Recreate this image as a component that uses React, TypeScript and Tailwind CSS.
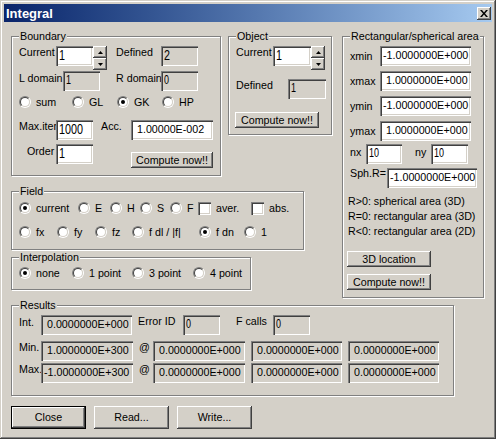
import React from 'react';

const sunken =
  'shadow-[inset_1px_1px_#808080,inset_2px_2px_#404040,inset_-1px_-1px_#ffffff,inset_-2px_-2px_#d4d0c8]';
const raised = 'shadow-[inset_-1px_-1px_#404040,inset_1px_1px_#ffffff,inset_-2px_-2px_#808080]';

type Size = 'n' | 'm' | 'b';

const Lbl: React.FC<{ className?: string; children: React.ReactNode }> = ({ className = '', children }) => (
  <span className={`block shrink-0 whitespace-nowrap leading-[13px] ${className}`}>{children}</span>
);

const Edit: React.FC<{ w: string; value: string; ro?: boolean; size?: Size }> = ({ w, value, ro, size = 'n' }) => (
  <div
    className={`${w} h-[20px] shrink-0 overflow-hidden whitespace-nowrap pl-[3px] ${ro ? 'bg-[#d4d0c8]' : 'bg-white'} ${sunken}`}
  >
    {size === 'b' && (
      <span className="block origin-left scale-x-[0.72] pt-[1px] text-[15px] leading-[15px]">{value}</span>
    )}
    {size === 'm' && (
      <span className="block origin-left scale-x-[0.72] pt-[3px] text-[12.5px] leading-[13px]">{value}</span>
    )}
    {size === 'n' && <span className="block pt-[3px] leading-[13px]">{value}</span>}
  </div>
);

const Btn: React.FC<{ className: string; children: React.ReactNode }> = ({ className, children }) => (
  <div className={`flex shrink-0 items-center justify-center whitespace-nowrap bg-[#d4d0c8] ${raised} ${className}`}>
    {children}
  </div>
);

const Spin: React.FC = () => (
  <div className="flex h-[24px] w-[14px] shrink-0 flex-col">
    <div className={`flex h-[12px] items-center justify-center bg-[#d4d0c8] ${raised}`}>
      <svg width="5" height="3" viewBox="0 0 5 3">
        <path d="M2.5 0L5 3H0z" fill="#000" />
      </svg>
    </div>
    <div className={`flex h-[12px] items-center justify-center bg-[#d4d0c8] ${raised}`}>
      <svg width="5" height="3" viewBox="0 0 5 3">
        <path d="M0 0h5L2.5 3z" fill="#000" />
      </svg>
    </div>
  </div>
);

const Radio: React.FC<{ on?: boolean }> = ({ on }) => (
  <span className="flex h-[12px] w-[12px] shrink-0 rounded-full border border-t-[#808080] border-r-white border-b-white border-l-[#808080]">
    <span className="flex flex-1 items-center justify-center rounded-full border border-t-[#404040] border-r-[#d4d0c8] border-b-[#d4d0c8] border-l-[#404040] bg-white">
      {on && <span className="h-[4px] w-[4px] rounded-full bg-black" />}
    </span>
  </span>
);

const Check: React.FC = () => <span className={`block h-[13px] w-[13px] shrink-0 bg-white ${sunken}`} />;

const Opt: React.FC<{ w?: string; on?: boolean; check?: boolean; label: string }> = ({ w = '', on, check, label }) => (
  <div className={`flex shrink-0 items-center ${w}`}>
    {check ? <Check /> : <Radio on={on} />}
    <span className="ml-[5px] whitespace-nowrap leading-[13px]">{label}</span>
  </div>
);

const Group: React.FC<{ label: string; className: string; children?: React.ReactNode }> = ({
  label,
  className,
  children,
}) => (
  <div className={`relative shrink-0 border border-[#808080] shadow-[inset_1px_1px_#ffffff,1px_1px_#ffffff] ${className}`}>
    <span className="absolute -top-[7px] left-[7px] whitespace-nowrap bg-[#d4d0c8] px-[1px] leading-[13px]">
      {label}
    </span>
    {children}
  </div>
);

export default function App() {
  return (
    <div className="h-[439px] w-[496px] bg-[#d4d0c8] p-[4px] font-['Liberation_Sans',Arial,sans-serif] text-[10.7px] text-black shadow-[inset_-1px_-1px_#404040,inset_1px_1px_#d4d0c8,inset_-2px_-2px_#808080,inset_2px_2px_#ffffff]">
      {/* Title bar */}
      <div className="flex h-[18px] items-center justify-between bg-linear-to-r from-[#0a246a] to-[#a6caf0] pr-[1px] pl-[2px]">
        <span className="text-[13px] leading-none font-bold text-white">Integral</span>
        <div className={`flex h-[13px] w-[14px] items-center justify-center bg-[#d4d0c8] ${raised}`}>
          <svg width="8" height="7" viewBox="0 0 8 7">
            <path d="M0 0h2l2 2.4L6 0h2L5 3.5 8 7H6L4 4.6 2 7H0l3-3.5z" fill="#000" />
          </svg>
        </div>
      </div>

      <div className="mt-[14px] pl-[7px]">
        <div className="flex items-start">
          <div className="w-[321px] shrink-0">
            <div className="flex items-start">
              {/* Boundary */}
              <Group label="Boundary" className="h-[140px] w-[210px] pt-[9px] pl-[7px]">
                <div className="flex items-start">
                  <Lbl className="w-[37px]">Current</Lbl>
                  <Edit w="w-[37px]" value="1" size="b" />
                  <Spin />
                  <Lbl className="ml-[9px] w-[45px]">Defined</Lbl>
                  <Edit w="w-[37px]" value="2" ro size="b" />
                </div>
                <div className="mt-[1px] flex items-start">
                  <Lbl className="mt-[1px] w-[44px]">L domain</Lbl>
                  <Edit w="w-[37px]" value="1" ro size="m" />
                  <Lbl className="mt-[1px] ml-[16px] w-[45px]">R domain</Lbl>
                  <Edit w="w-[37px]" value="0" ro size="m" />
                </div>
                <div className="mt-[5px] flex h-[12px] items-center">
                  <Opt w="w-[53px]" label="sum" />
                  <Opt w="w-[45px]" label="GL" />
                  <Opt w="w-[45px]" on label="GK" />
                  <Opt label="HP" />
                </div>
                <div className="mt-[12px] flex items-start">
                  <Lbl className="w-[37px]">Max.iter</Lbl>
                  <Edit w="w-[37px]" value="1000" size="b" />
                  <Lbl className="ml-[8px] w-[30px]">Acc.</Lbl>
                  <Edit w="w-[82px]" value={'\u00a01.00000E-002'} />
                </div>
                <div className="mt-[4px] flex items-start">
                  <Lbl className="mt-[1px] ml-[8px] w-[29px]">Order</Lbl>
                  <Edit w="w-[37px]" value="1" size="b" />
                  <Btn className="mt-[8px] ml-[38px] h-[16px] w-[82px]">Compute now!!</Btn>
                </div>
              </Group>

              {/* Object */}
              <Group label="Object" className="ml-[7px] h-[99px] w-[104px] pt-[9px] pl-[7px]">
                <div className="flex items-start">
                  <Lbl className="w-[37px]">Current</Lbl>
                  <Edit w="w-[38px]" value="1" size="b" />
                  <Spin />
                </div>
                <div className="mt-[9px] flex items-start">
                  <Lbl className="w-[52px]">Defined</Lbl>
                  <Edit w="w-[38px]" value="1" ro size="m" />
                </div>
                <Btn className="mt-[13px] -ml-[1px] h-[16px] w-[84px]">Compute now!!</Btn>
              </Group>
            </div>

            {/* Field */}
            <Group label="Field" className="mt-[15px] h-[59px] w-[293px] pt-[10px] pl-[7px]">
              <div className="flex h-[12px] items-center">
                <Opt w="w-[59px]" on label="current" />
                <Opt w="w-[32px]" label="E" />
                <Opt w="w-[30px]" label="H" />
                <Opt w="w-[30px]" label="S" />
                <Opt w="w-[28px]" label="F" />
                <Opt w="w-[53px]" check label="aver." />
                <Opt check label="abs." />
              </div>
              <div className="mt-[12px] flex h-[12px] items-center">
                <Opt w="w-[38px]" label="fx" />
                <Opt w="w-[38px]" label="fy" />
                <Opt w="w-[37px]" label="fz" />
                <Opt w="w-[67px]" label="f dl / |f|" />
                <Opt w="w-[45px]" on label="f dn" />
                <Opt label="1" />
              </div>
            </Group>

            {/* Interpolation */}
            <Group label="Interpolation" className="mt-[7px] h-[33px] w-[240px] pt-[9px] pl-[7px]">
              <div className="flex h-[12px] items-center">
                <Opt w="w-[53px]" on label="none" />
                <Opt w="w-[60px]" label="1 point" />
                <Opt w="w-[61px]" label="3 point" />
                <Opt label="4 point" />
              </div>
            </Group>
          </div>

          {/* Rectangular/spherical area */}
          <Group label="Rectangular/spherical area" className="ml-[10px] h-[262px] w-[142px] pt-[9px] pl-[7px]">
            <div className="flex h-[20px] items-center">
              <Lbl className="mt-[1px] w-[30px]">xmin</Lbl>
              <Edit w="w-[91px]" value="-1.0000000E+000" />
            </div>
            <div className="mt-[5px] flex h-[20px] items-center">
              <Lbl className="mt-[1px] w-[30px]">xmax</Lbl>
              <Edit w="w-[91px]" value={'\u00a01.0000000E+000'} />
            </div>
            <div className="mt-[5px] flex h-[20px] items-center">
              <Lbl className="mt-[1px] w-[30px]">ymin</Lbl>
              <Edit w="w-[91px]" value="-1.0000000E+000" />
            </div>
            <div className="mt-[5px] flex h-[20px] items-center">
              <Lbl className="mt-[1px] w-[30px]">ymax</Lbl>
              <Edit w="w-[91px]" value={'\u00a01.0000000E+000'} />
            </div>
            <div className="mt-[3px] flex items-start">
              <Lbl className="mt-[2px] w-[16px]">nx</Lbl>
              <Edit w="w-[36px]" value="10" size="m" />
              <Lbl className="mt-[2px] ml-[13px] w-[16px]">ny</Lbl>
              <Edit w="w-[37px]" value="10" size="m" />
            </div>
            <div className="mt-[4px] flex items-start">
              <Lbl className="-mt-[1px] w-[37px]">Sph.R=</Lbl>
              <Edit w="w-[90px]" value="-1.0000000E+000" />
            </div>
            <div className="mt-[6px] -ml-[2px] leading-[15px] whitespace-nowrap">
              <div>R&gt;0: spherical area (3D)</div>
              <div>R=0: rectangular area (3D)</div>
              <div>R&lt;0: rectangular area (2D)</div>
            </div>
            <Btn className="mt-[12px] -ml-[3px] h-[16px] w-[84px]">3D location</Btn>
            <Btn className="mt-[7px] -ml-[3px] h-[16px] w-[84px]">Compute now!!</Btn>
          </Group>
        </div>

        {/* Results */}
        <Group label="Results" className="mt-[7px] h-[91px] w-[443px] pt-[9px] pl-[7px]">
          <div className="flex items-start">
            <Lbl className="mt-[1px] w-[22px]">Int.</Lbl>
            <Edit w="w-[91px]" value={'\u00a00.0000000E+000'} ro />
            <Lbl className="ml-[6px] w-[45px]">Error ID</Lbl>
            <Edit w="w-[37px]" value="0" ro size="m" />
            <Lbl className="ml-[16px] w-[37px]">F calls</Lbl>
            <Edit w="w-[37px]" value="0" ro size="m" />
          </div>
          <div className="mt-[6px] flex items-start">
            <Lbl className="w-[22px]">Min.</Lbl>
            <Edit w="w-[92px]" value={'\u00a01.0000000E+300'} ro />
            <Lbl className="ml-[6px] w-[14px]">@</Lbl>
            <Edit w="w-[92px]" value={'\u00a00.0000000E+000'} ro />
            <div className="ml-[6px]">
              <Edit w="w-[91px]" value={'\u00a00.0000000E+000'} ro />
            </div>
            <div className="ml-[6px]">
              <Edit w="w-[91px]" value={'\u00a00.0000000E+000'} ro />
            </div>
          </div>
          <div className="mt-[2px] flex items-start">
            <Lbl className="w-[22px]">Max.</Lbl>
            <Edit w="w-[92px]" value="-1.0000000E+300" ro />
            <Lbl className="ml-[6px] w-[14px]">@</Lbl>
            <Edit w="w-[92px]" value={'\u00a00.0000000E+000'} ro />
            <div className="ml-[6px]">
              <Edit w="w-[91px]" value={'\u00a00.0000000E+000'} ro />
            </div>
            <div className="ml-[6px]">
              <Edit w="w-[91px]" value={'\u00a00.0000000E+000'} ro />
            </div>
          </div>
        </Group>

        {/* Dialog buttons */}
        <div className="mt-[10px] flex gap-[8px]">
          <div className="h-[23px] w-[75px] border border-black">
            <Btn className="h-full w-full">Close</Btn>
          </div>
          <Btn className="h-[23px] w-[75px]">Read...</Btn>
          <Btn className="h-[23px] w-[75px]">Write...</Btn>
        </div>
      </div>
    </div>
  );
}
